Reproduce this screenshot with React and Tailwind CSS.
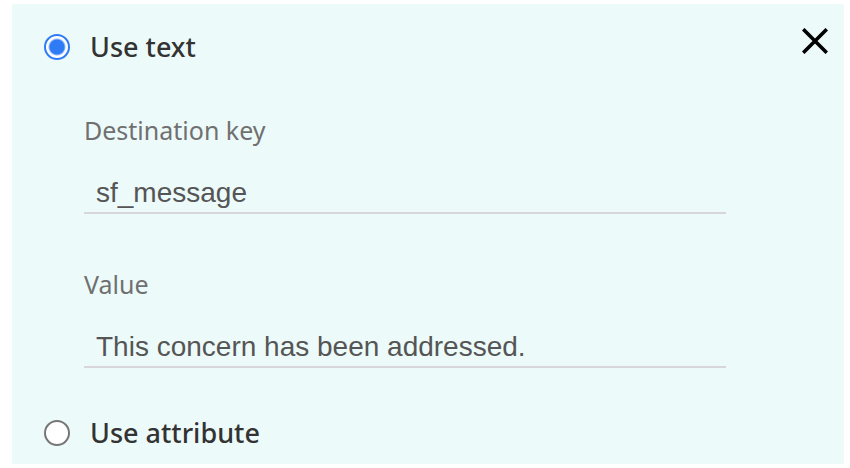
import { useState } from "react";

function RadioOption({ value, label, selected, onSelect }) {
  return (
    <label className="flex w-fit items-center gap-5 text-[27px] leading-[38px] font-medium text-[#333]">
      <input
        type="radio"
        name="source"
        value={value}
        checked={selected}
        onChange={() => onSelect(value)}
        className="m-0 size-[26px] shrink-0 appearance-none rounded-full border-2 border-[#767676] bg-white checked:border-[#2f7bf6] checked:bg-[radial-gradient(circle,#2f7bf6_7px,#fff_9px)]"
      />
      {label}
    </label>
  );
}

function Field({ id, label, defaultValue }) {
  return (
    <div className="flex flex-col gap-7">
      <label htmlFor={id} className="text-[25px] leading-8 text-[#707070]">
        {label}
      </label>
      <input
        id={id}
        type="text"
        defaultValue={defaultValue}
        className="h-10 w-full border-b-2 border-[#d8d6d8] bg-transparent px-3 font-['Liberation_Sans',Arial,sans-serif] text-[28px] text-[#555] outline-none"
      />
    </div>
  );
}

export default function App() {
  const [source, setSource] = useState("text");

  return (
    <main className="bg-white py-1 pr-1.5 pl-3 font-['Noto_Sans','Open_Sans',sans-serif]">
      <form className="bg-[#edfafa] px-8 pt-6 pb-3">
        <div className="flex items-start justify-between">
          <RadioOption value="text" label="Use text" selected={source === "text"} onSelect={setSource} />
          <button type="button" aria-label="Close" className="-mr-4">
            <svg viewBox="0 0 26 26" className="size-[26px]" fill="none" stroke="#000" strokeWidth="3.6">
              <path d="M1.2 1.2 24.8 24.8M24.8 1.2 1.2 24.8" />
            </svg>
          </button>
        </div>
        <div className="mt-12 mr-[86px] mb-[46px] ml-10 flex flex-col gap-[54px]">
          <Field id="destination-key" label="Destination key" defaultValue="sf_message" />
          <Field id="value" label="Value" defaultValue="This concern has been addressed." />
        </div>
        <RadioOption value="attribute" label="Use attribute" selected={source === "attribute"} onSelect={setSource} />
      </form>
    </main>
  );
}
